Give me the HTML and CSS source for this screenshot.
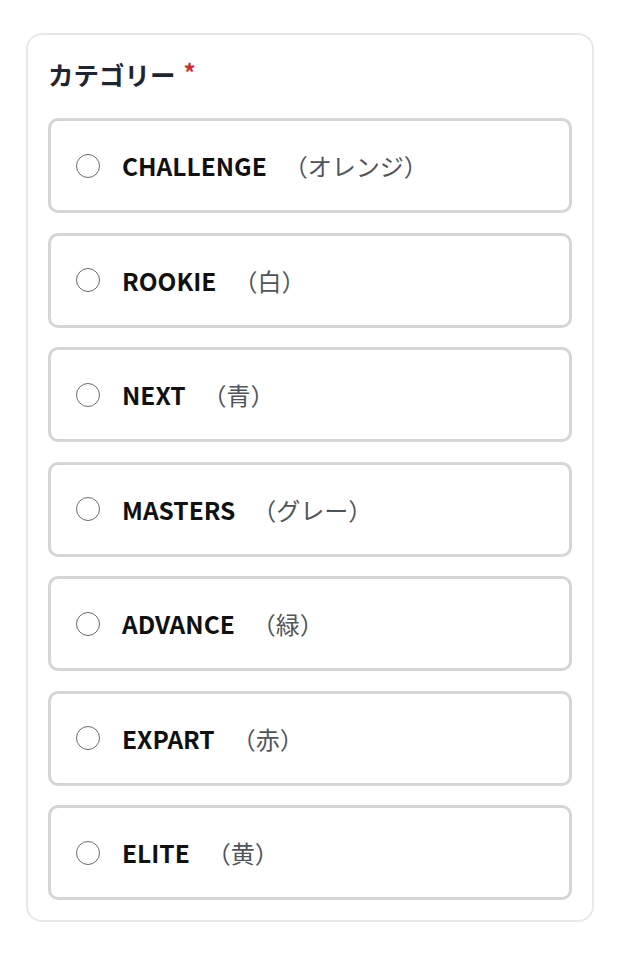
FILE: index.html
```html
<!DOCTYPE html>
<html lang="ja">
<head>
    <meta charset="UTF-8">
    <meta name="viewport" content="width=device-width, initial-scale=1.0">
    <title>カテゴリー</title>
    <link rel="stylesheet" href="styles.css">
</head>
<body>
    <div class="page">
        <div class="card">
            <div class="label">カテゴリー<span class="required">*</span></div>
            <div class="options">
                <label class="option"><span class="radio"></span><span class="name">CHALLENGE</span><span class="color">（オレンジ）</span></label>
                <label class="option"><span class="radio"></span><span class="name">ROOKIE</span><span class="color">（白）</span></label>
                <label class="option"><span class="radio"></span><span class="name">NEXT</span><span class="color">（青）</span></label>
                <label class="option"><span class="radio"></span><span class="name">MASTERS</span><span class="color">（グレー）</span></label>
                <label class="option"><span class="radio"></span><span class="name">ADVANCE</span><span class="color">（緑）</span></label>
                <label class="option"><span class="radio"></span><span class="name">EXPART</span><span class="color">（赤）</span></label>
                <label class="option"><span class="radio"></span><span class="name">ELITE</span><span class="color">（黄）</span></label>
            </div>
        </div>
    </div>
</body>
</html>
```

FILE: styles.css
```css
body{
    margin: 0;
    background: #fff;
    font-family: "Noto Sans CJK JP", "Noto Sans", sans-serif;
}

.page{
    padding: 33px 26px;
}

.card{
    border: 2px solid #e8e8e8;
    border-radius: 16px;
    padding: 21px 20px 20px;
}

.label{
    font-size: 25.5px;
    font-weight: bold;
    line-height: 36px;
    color: #1f2530;
    margin-bottom: 26px;
}

.required{
    color: #d42a2a;
    font-size: 24px;
    margin-left: 8px;
    vertical-align: top;
    line-height: 32px;
}

.options{
    display: flex;
    flex-direction: column;
    gap: 19.5px;
}

.option{
    display: flex;
    align-items: center;
    height: 89px;
    border: 3px solid #d5d5d5;
    border-radius: 10px;
    padding-left: 25px;
}

.radio{
    width: 22px;
    height: 22px;
    border: 1.5px solid #6b6b6b;
    border-radius: 50%;
    margin-right: 22px;
    flex-shrink: 0;
}

.name{
    font-size: 24.5px;
    font-weight: bold;
    color: #111;
}

.color{
    font-size: 24px;
    color: #50555b;
    margin-left: 17px;
}
```
